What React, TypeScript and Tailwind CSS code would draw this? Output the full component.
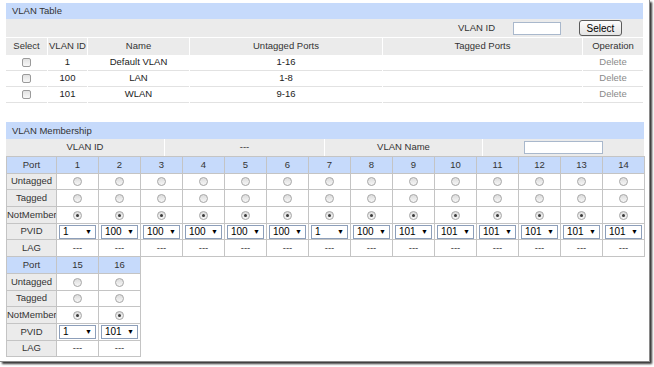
import React from "react";

const cols = [42, 40, 102, 193, 200, 60];

function Radio({ checked }: { checked?: boolean }) {
  return (
    <span className="inline-flex w-[9px] h-[9px] rounded-full border border-[#a8a8a8] bg-gradient-to-b from-[#dcdcdc] to-[#f7f7f7] items-center justify-center align-middle">
      {checked && <span className="block w-[3px] h-[3px] rounded-full bg-[#3a3a3a]" />}
    </span>
  );
}

function Sel({ v }: { v: string }) {
  return (
    <div className="mx-auto w-[37px] h-[14px] border border-[#8d9fba] bg-white flex items-center justify-between pl-[3px] pr-[3px] text-[10px] leading-none text-black">
      <span>{v}</span>
      <span className="text-[7px]">▼</span>
    </div>
  );
}

function Grid({ ports, pvids, cls }: { ports: number[]; pvids: string[]; cls?: string }) {
  const label = "h-[16.7px] p-0 border border-[#c4c4c4] bg-[#ebebeb] text-[#333] text-center w-[50px] whitespace-nowrap overflow-hidden";
  const cell = "h-[16.7px] p-0 border border-[#c4c4c4] bg-white text-center w-[42px]";
  return (
    <table className={"border-collapse table-fixed text-[9.5px] " + (cls || "")} style={{ width: 50 + 42 * ports.length }}>
      <tbody>
        <tr>
          <td className="h-[16.7px] p-0 border border-[#c4c4c4] bg-[#c6dafb] text-[#333] text-center w-[50px]">Port</td>
          {ports.map((p) => (
            <td key={p} className="h-[16.7px] p-0 border border-[#c4c4c4] bg-[#c6dafb] text-[#333] text-center w-[42px]">{p}</td>
          ))}
        </tr>
        <tr>
          <td className={label}>Untagged</td>
          {ports.map((p) => (
            <td key={p} className={cell}><Radio /></td>
          ))}
        </tr>
        <tr>
          <td className={label}>Tagged</td>
          {ports.map((p) => (
            <td key={p} className={cell}><Radio /></td>
          ))}
        </tr>
        <tr>
          <td className={label}>NotMember</td>
          {ports.map((p) => (
            <td key={p} className={cell}><Radio checked /></td>
          ))}
        </tr>
        <tr>
          <td className={label}>PVID</td>
          {ports.map((p, i) => (
            <td key={p} className={cell}><Sel v={pvids[i]} /></td>
          ))}
        </tr>
        <tr>
          <td className={label}>LAG</td>
          {ports.map((p) => (
            <td key={p} className={cell + " text-[#333]"}>---</td>
          ))}
        </tr>
      </tbody>
    </table>
  );
}

export default function App() {
  const rows = [
    ["1", "Default VLAN", "1-16"],
    ["100", "LAN", "1-8"],
    ["101", "WLAN", "9-16"],
  ];
  const pv = ["1", "100", "100", "100", "100", "100", "1", "100", "101", "101", "101", "101", "101", "101"];
  return (
    <div className="w-[654px] h-[367px] bg-white font-['Liberation_Sans',Arial,sans-serif]">
      <div className="w-[650px] h-[362px] bg-white border-r border-b border-[#8a8a8a] shadow-[2px_2px_2px_rgba(0,0,0,0.8)] pt-[3px] pl-[6px]">
        {/* VLAN Table */}
        <div className="w-[637px]">
          <div className="h-[16px] bg-[#c6dafb] text-[9.5px] text-[#333] leading-[16px] pl-[6px]">VLAN Table</div>
          <div className="h-[18px] bg-[#ebebeb] flex items-center justify-end pr-[21px] text-[9.5px] text-[#333]">
            <span>VLAN ID</span>
            <div className="ml-[18px] w-[48px] h-[13px] bg-white border border-[#a9b8cc]" />
            <div className="ml-[18px] w-[43px] h-[16px] rounded-[3px] border border-[#5a5a5a] bg-gradient-to-b from-[#fdfdfd] to-[#e4e4e4] flex items-center justify-center text-[10px] text-black">Select</div>
          </div>
          <div className="h-[1px] bg-white" />
          <div className="flex gap-[1px] h-[17px]">
            {["Select", "VLAN ID", "Name", "Untagged Ports", "Tagged Ports", "Operation"].map((h, i) => (
              <div key={h} className="bg-[#ebebeb] text-[9.5px] text-[#333] flex items-center justify-center" style={{ width: cols[i] - (i === 5 ? 0 : 1) }}>
                {h}
              </div>
            ))}
          </div>
          {rows.map((r) => (
            <div key={r[0]} className="flex gap-[1px] h-[16px] text-[9.5px] text-[#222]">
              {[null, r[0], r[1], r[2], "", "Delete"].map((c, i) => (
                <div key={i} className={"border-b border-[#e2e2e2] flex items-center justify-center " + (i === 5 ? "text-[#8a8a8a]" : "")} style={{ width: cols[i] - (i === 5 ? 0 : 1) }}>
                  {i === 0 ? <span className="block w-[9px] h-[9px] rounded-[2px] border border-[#9a9a9a] bg-gradient-to-b from-[#e2e2e2] to-[#f8f8f8]" /> : c}
                </div>
              ))}
            </div>
          ))}
        </div>

        {/* VLAN Membership */}
        <div className="w-[638px] mt-[19px]">
          <div className="h-[17px] bg-[#c6dafb] text-[9.5px] text-[#333] leading-[17px] pl-[6px]">VLAN Membership</div>
          <div className="flex gap-[1px] h-[17px] text-[9.5px] text-[#333]">
            <div className="w-[158px] bg-[#ebebeb] flex items-center justify-center">VLAN ID</div>
            <div className="w-[159px] bg-[#ebebeb] flex items-center justify-center">---</div>
            <div className="w-[157px] bg-[#ebebeb] flex items-center justify-center">VLAN Name</div>
            <div className="w-[161px] bg-[#ebebeb] flex items-center justify-center">
              <div className="w-[79px] h-[13px] bg-white border border-[#a9b8cc]" />
            </div>
          </div>
          <Grid ports={[1, 2, 3, 4, 5, 6, 7, 8, 9, 10, 11, 12, 13, 14]} pvids={pv} />
          <Grid ports={[15, 16]} pvids={["1", "101"]} cls="-mt-px" />
        </div>
      </div>
    </div>
  );
}
